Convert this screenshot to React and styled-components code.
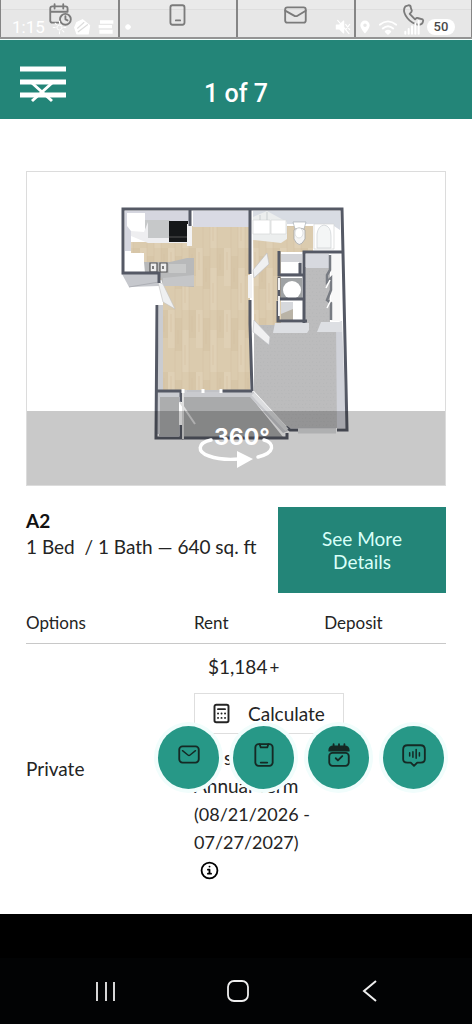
import React from "react";
import styled, { createGlobalStyle } from "styled-components";

const GlobalStyle = createGlobalStyle`
  * { box-sizing: border-box; }
  body { margin: 0; background: #000; }
  button { font-family: inherit; cursor: pointer; }
`;

const Screen = styled.div`
  display: flex;
  flex-direction: column;
  min-height: 100vh;
  background: #000;
  color: #242424;
  font-family: Lato, "Open Sans", sans-serif;
`;

const TopBar = styled.div`
  position: relative;
  background: #e8e8e8;
  border-bottom: 1px solid #f4fffd;
`;

const Tabs = styled.nav`
  display: grid;
  grid-template-columns: repeat(4, 1fr);
  height: 39px;
  border-bottom: 2px solid #949494;
`;

const Tab = styled.button`
  display: flex;
  justify-content: center;
  align-items: flex-start;
  padding: 2px 0 0;
  border: 0;
  border-left: 2px solid #858585;
  background: linear-gradient(#eaeaea 9px, #dedede 9px, #dedede 10px, #e7e7e7 10px);
  color: #7b7b7b;

  &:first-child { border-left: 1px solid #858585; }
  &:last-child { border-right: 1px solid #858585; }
`;

const StatusBar = styled.div`
  position: absolute;
  inset: 17px 17px auto 12px;
  display: flex;
  align-items: center;
  height: 20px;
  gap: 7px;
  color: #fff;
  font: 400 17px/20px Roboto, sans-serif;
  pointer-events: none;
`;

const Spacer = styled.span`
  flex: 1;
`;

const Battery = styled.span`
  width: 28px;
  border-radius: 8px;
  background: #fff;
  color: #4a4a4a;
  font-size: 13px;
  font-weight: 500;
  line-height: 16px;
  text-align: center;
`;

const Header = styled.header`
  display: grid;
  grid-template-columns: 1fr auto 1fr;
  align-items: start;
  height: 79px;
  padding: 25px 19px 0;
  background: #238578;
`;

const MenuButton = styled.button`
  display: flex;
  justify-self: start;
  padding: 0;
  border: 0;
  background: none;
`;

const Counter = styled.span`
  padding-top: 14px;
  color: #fff;
  font: 500 25px/30px Roboto, sans-serif;
`;

const Main = styled.main`
  padding: 52px 26px 30px;
  background: #fff;
`;

const PlanFrame = styled.button`
  display: block;
  width: 100%;
  padding: 0;
  border: 1px solid #dcdcdc;
  background: #fff;

  svg { display: block; width: 100%; height: auto; }
`;

const Summary = styled.section`
  display: flex;
  justify-content: space-between;
  padding-top: 21px;
`;

const PlanName = styled.h2`
  margin: 0;
  color: #111;
  font-size: 19px;
  font-weight: 700;
  line-height: 27px;
`;

const PlanFacts = styled.p`
  margin: 0;
  font-size: 19px;
  line-height: 26px;
  white-space: pre;
`;

const DetailsButton = styled.button`
  flex: 0 0 40%;
  padding: 20px 32px;
  border: 0;
  background: #238578;
  color: #d9fff8;
  font-size: 19px;
  line-height: 23px;
`;

const Pricing = styled.section`
  position: relative;
  padding-top: 16px;
`;

const PriceTable = styled.table`
  width: 100%;
  table-layout: fixed;
  border-collapse: collapse;
  font-size: 19px;
  line-height: 28px;
`;

const HeadCell = styled.th`
  width: ${(p) => p.$width};
  padding: 0 0 6px;
  border-bottom: 1px solid #c8c8c8;
  font-size: 17px;
  font-weight: 400;
  text-align: left;
`;

const Cell = styled.td`
  padding: 9px 0 0;
  vertical-align: middle;
  white-space: nowrap;
`;

const Price = styled.div`
  padding-left: 14px;

  small { margin-left: 2px; font-size: 17px; }
`;

const CalculateButton = styled.button`
  display: flex;
  align-items: center;
  gap: 16px;
  width: 150px;
  height: 41px;
  margin: 11px 0 10px;
  padding: 0 16px 0 16px;
  border: 1px solid #dedede;
  background: #fff;
  color: #242424;
  font-size: 19px;
  line-height: 28px;
`;

const TermLine = styled.div`
  padding-left: ${(p) => (p.$indent ? "30px" : "0")};
  font-size: ${(p) => (p.$dates ? "18px" : "19px")};
`;

const InfoButton = styled.button`
  display: flex;
  align-items: center;
  height: 28px;
  padding: 0 6px;
  border: 0;
  background: none;
`;

const FloatingActions = styled.div`
  position: absolute;
  right: 2px;
  bottom: 95px;
  display: flex;
  gap: 14px;
`;

const RoundButton = styled.button`
  display: flex;
  justify-content: center;
  width: 61px;
  height: 63px;
  padding: 16px 0 0;
  border: 0;
  border-radius: 50%;
  box-shadow: 0 0 0 4px #f1fdfc;
  background: #279887;
  color: #152924;
`;

const SystemNav = styled.nav`
  display: flex;
  justify-content: center;
  gap: 92px;
  height: 66px;
  margin-top: auto;
  padding: 13px 0 0 4px;
  background: #020304;
`;

const SystemButton = styled.button`
  width: 40px;
  height: 40px;
  padding: 0;
  border: 0;
  background: none;
  color: #eee;
`;

function Icon({ size = 26, view = 24, stroke = 1.7, children }) {
  return (
    <svg
      width={size}
      height={size}
      viewBox={`0 0 ${view} ${view}`}
      fill="none"
      stroke="currentColor"
      strokeWidth={stroke}
      strokeLinecap="round"
      strokeLinejoin="round"
      aria-hidden="true"
    >
      {children}
    </svg>
  );
}

function FloorPlan() {
  return (
    <svg viewBox="27 172 418 313" role="img" aria-label="A2 floor plan">
      <defs>
        <pattern id="wood" width="28" height="62" patternUnits="userSpaceOnUse">
          <rect width="28" height="62" fill="#dbcbae" />
          <path d="M0 0h7v38H0zM14 20h7v42h-7z" fill="#dfd0b5" />
          <path d="M7 8h7v33H7zM21 0h7v28h-7z" fill="#d7c6a8" />
          <path d="M3 4v18M10 20v14M17 35v20M24 6v16" stroke="#d1bf9f" strokeWidth=".6" />
          <path d="M7 0v62M14 0v62M21 0v62" stroke="#d2c09f" strokeWidth=".4" />
        </pattern>
        <pattern id="carpet" width="7" height="7" patternUnits="userSpaceOnUse">
          <rect width="7" height="7" fill="#bcbcbd" />
          <path d="M1 1l2 1M5 4l-1 2M2 5l-1 1M6 1v1" stroke="#b5b6b7" strokeWidth=".7" />
        </pattern>
      </defs>

      {/* Floors */}
      <path d="M131 242H192V226H250V391H163V280H145V262H131Z" fill="url(#wood)" />
      <path d="M253 226H313V252H281V325H269L254 326Z" fill="url(#wood)" />
      <path d="M254 325H303V267H330V325H337V428H288L254 391Z" fill="url(#carpet)" />
      <path d="M184 397H251L283 437H184Z" fill="#a9aaab" />
      <path d="M159 397H179V436H159Z" fill="#acadae" />

      {/* Wall faces */}
      <path d="M125 211H191V222H131V251H125Z" fill="#d5d6df" />
      <path d="M193 211H249V227H193Z" fill="#d9dae4" />
      <path d="M253 211H340V230L331 224H287V229H253Z" fill="#d8dce3" />
      <path d="M122 274H159V286L129 287Z" fill="#c6c8cd" />
      <path d="M129 287 159 282" stroke="#aeb0b6" />
      <path d="M159 305H163V390H184V397H160V434H156Z" fill="#caccd1" />
      <path d="M336 323 342 321 346 428H337Z" fill="#d0d2d9" />
      <path d="M252 390H183V397H250L283 433 288 431Z" fill="#c9cace" />
      <path d="M306 254H329V268H306Z" fill="#d7d9df" />

      {/* Kitchen */}
      <path d="M145 220H170V238H145Z" fill="#c6c8c9" />
      <path d="M127 213H145V232L131 231 127 226Z" fill="#fff" />
      <path d="M144 232 148 222V238H190V243H148L131 236V231Z" fill="#eeeef0" />
      <path d="M148 221H169V237H148Z" fill="#c6c8c9" />
      <path d="M169 221H188V242H169Z" fill="#151719" />
      <path d="M169 237H188" stroke="#555" />
      <path d="M187 224H192V246H187Z" fill="#f3f3f4" />
      <path d="M125 253H144V271H125Z" fill="#fff" />
      <path d="M144 262H170L187 258H194V287L163 285 159 273H145Z" fill="#b8b9ba" />
      <path d="M169 264H186V273H169Z" fill="#c8c9c9" />
      <path d="M163 278 194 275V286H163Z" fill="#c5c6c8" />
      <path d="M150 263h7v9h-7zM160 263h7v9h-7z" fill="#eee" stroke="#555" strokeWidth="1.2" />
      <path d="M153 266v3M163 266v3" stroke="#555" strokeWidth="1.5" />
      <path d="M158 282 163 284 175 309 163 302Z" fill="#eff0f1" stroke="#c1c1c1" strokeWidth=".6" />

      {/* Bathroom and laundry */}
      <path d="M253 217 267 211 287 222V239L281 243 253 240Z" fill="#eceeee" />
      <path d="M253 220H270V234H253ZM271 220H286V234H271Z" fill="#fff" stroke="#d9dada" strokeWidth=".8" />
      <path d="M267 212V220M260 215V220" stroke="#bdc1c4" strokeWidth=".7" />
      <path d="M293 222H306L304 229H295Z" fill="#fff" stroke="#9ba2a7" strokeWidth=".6" />
      <path d="M294 230Q299 226 305 230V239Q299 250 294 239Z" fill="#f5f5f5" stroke="#a5a6a7" strokeWidth=".8" />
      <ellipse cx="299" cy="233" rx="4" ry="5" fill="#fff" stroke="#c9cdce" strokeWidth=".6" />
      <path d="M314 224H334V249H314Z" fill="#fff" stroke="#d4d5d5" strokeWidth=".7" />
      <path d="M317 248V234Q318 226 324 225Q331 226 331 236V248Z" fill="#f4f6f6" stroke="#cbd0d2" strokeWidth=".7" />
      <path d="M281 254H302V275H281Z" fill="#d3d4d8" />
      <path d="M281 262H299V273H281Z" fill="#fff" />
      <path d="M281 278H302V299H281Z" fill="#9fa2a4" />
      <circle cx="292" cy="290" r="9" fill="#fff" />
      <path d="M281 302H293V320H281Z" fill="#b9b3a6" />
      <path d="M281 302H293V309L281 314Z" fill="#d6d8dc" />
      <path d="M293 302H304V320H293Z" fill="#fff" />
      <path d="M331 254H340V321H331Z" fill="#f8f8f8" />
      <path d="M330 255V270L327 275V282L331 278V290L327 300L331 303V320" fill="none" stroke="#777b82" strokeWidth="2.5" />
      <path d="M326 288 330 280M327 308 331 300" stroke="#fff" strokeWidth="1.5" />

      {/* Walls */}
      <g fill="none" stroke="#555965" strokeWidth="3" strokeLinejoin="miter">
        <path d="M159 273H123V209H342L347 430H337" />
        <path d="M190 210V226M159 272V283M250 209V274M250 300V324L252 391" />
        <path d="M157 305 156 438H181V425M156 391H181V402M222 391H252" />
        <path d="M342 252H304V324M279 251V275H303M279 277V299H303M278 301V321H307" />
        <path d="M286 427 290 430H298M182 438H287V433M300 263V274" />
      </g>
      <path d="M250 275V298" stroke="#f2f2f3" strokeWidth="4" />
      <path d="M279 278V290M279 296V316" stroke="#f2f2f3" strokeWidth="2" />
      <path d="M298 431H336" stroke="#dfe0e1" strokeWidth="5" />
      <path d="M298 428H336M187 391H221" stroke="#b9babd" />
      <path d="M275 323H309V330L307 333H273Z" fill="#dddfe3" />
      <path d="M321 322H342V332H317Z" fill="#dddfe3" />

      {/* Doors */}
      <path d="M253 270 267 253 269 264 254 278Z" fill="#eff0f1" stroke="#bcbec2" strokeWidth=".6" />
      <path d="M254 320 270 337 269 345 253 332Z" fill="#f0f0f1" stroke="#bcbec2" strokeWidth=".6" />
      <path d="M180 402 195 424M183 392V439" stroke="#dedede" strokeWidth="2" />
      <path d="M253 394 287 430" stroke="#dcdddf" strokeWidth="4" />
      <path d="M183 389V393M203 389V393M221 389V393" stroke="#fff" strokeWidth="3" />

      {/* Virtual tour banner */}
      <rect x="27" y="411" width="418" height="75" fill="#000" fillOpacity=".21" />
      <g fill="none" stroke="#fff" strokeWidth="3.5" strokeLinecap="round">
        <path d="M211 440C197 443 197 452 209 456C217 459 227 460 239 459" />
        <path d="M264 440C275 443 275 453 258 457" />
      </g>
      <path d="M237 451 253 459 237 468Z" fill="#fff" />
      <text x="214" y="445" fill="#fff" fontFamily="Inter, sans-serif" fontSize="23" fontWeight="700">360°</text>
    </svg>
  );
}

export default function App() {
  return (
    <Screen>
      <GlobalStyle />
      <TopBar>
        <Tabs aria-label="Contact">
          <Tab aria-label="Schedule">
            <Icon>
              <path d="M11 19H5a2 2 0 0 1-2-2V6a2 2 0 0 1 2-2h12a2 2 0 0 1 2 2v3M3 9h16M7 2v4M15 2v4" />
              <circle cx="17" cy="16" r="5" />
              <path d="M17 13v3l2 1" />
            </Icon>
          </Tab>
          <Tab aria-label="Text">
            <Icon>
              <rect x="5" y="3" width="13" height="18" rx="2" />
              <path d="M10 17h4" />
            </Icon>
          </Tab>
          <Tab aria-label="Email">
            <Icon>
              <rect x="2" y="5" width="19" height="14" rx="2" />
              <path d="M2 8l9 5q1 0 2 0l8-5" />
            </Icon>
          </Tab>
          <Tab aria-label="Call">
            <Icon>
              <path d="M4 4l3-1q2 0 2 2l1 3q0 1-2 3l5 5q2-2 3-1l4 1q1 1 0 3-1 2-4 2-6-1-10-6Q2 10 3 6z" />
            </Icon>
          </Tab>
        </Tabs>
        <StatusBar>
          <span>1:15</span>
          <Icon size={15}>
            <circle cx="12" cy="12" r="4" strokeDasharray="2 2" />
            <path d="M12 2v3M12 19v3M2 12h3M19 12h3M5 5l2 2M17 17l2 2" />
          </Icon>
          <Icon size={17}>
            <path d="M4 5l8-4 10 8-2 12H4l-3-9z" fill="currentColor" />
            <path d="M5 13l9-8M6 18L19 8" stroke="#ddd" />
          </Icon>
          <Icon size={16}>
            <path d="M3 2h20v5H3zM1 9h20v5H1zM2 16h20v6H2z" fill="currentColor" stroke="none" />
          </Icon>
          <Icon size={14}><circle cx="12" cy="12" r="4" fill="currentColor" /></Icon>
          <Spacer />
          <Icon size={16}>
            <path d="M2 9h5l6-6v18l-6-6H2z" fill="currentColor" />
            <path d="M16 8l6 8M22 8l-6 8M4 2l17 20" />
          </Icon>
          <Icon size={14}>
            <path fillRule="evenodd" d="M12 1a8 8 0 0 0-8 8c0 6 8 14 8 14s8-8 8-14a8 8 0 0 0-8-8zm0 5a3 3 0 1 1 0 6 3 3 0 0 1 0-6z" fill="currentColor" stroke="none" />
          </Icon>
          <Icon size={18} stroke={2.4}>
            <path d="M1 9q11-9 22 0M5 14q7-6 14 0M9 18q3-2 6 0l-3 3z" />
          </Icon>
          <Icon size={16} stroke={3}>
            <path d="M2 22v-3M7 22v-7M12 22V11M17 22V7M22 22V3" />
          </Icon>
          <Battery>50</Battery>
        </StatusBar>
      </TopBar>

      <Header>
        <MenuButton aria-label="Menu">
          <svg width="48" height="40" viewBox="0 0 48 40" fill="none" stroke="#fff" aria-hidden="true">
            <path d="M1 4H47M1 17H47M1 30H47" strokeWidth="5" />
            <path d="M13 18L33 36M33 18L13 36" strokeWidth="3" />
          </svg>
        </MenuButton>
        <Counter>1 of 7</Counter>
      </Header>

      <Main>
        <PlanFrame aria-label="Open 360° view"><FloorPlan /></PlanFrame>

        <Summary>
          <div>
            <PlanName>A2</PlanName>
            <PlanFacts>{"1 Bed  / 1 Bath — 640 sq. ft"}</PlanFacts>
          </div>
          <DetailsButton>See More Details</DetailsButton>
        </Summary>

        <Pricing>
          <PriceTable>
            <thead>
              <tr>
                <HeadCell $width="40%">Options</HeadCell>
                <HeadCell $width="31%">Rent</HeadCell>
                <HeadCell $width="29%">Deposit</HeadCell>
              </tr>
            </thead>
            <tbody>
              <tr>
                <Cell>Private</Cell>
                <Cell>
                  <Price>$1,184<small>+</small></Price>
                  <CalculateButton>
                    <Icon size={21} stroke={2.2}>
                      <rect x="4" y="2" width="16" height="20" rx="2" />
                      <path d="M8 7h8M8 12h.1M12 12h.1M16 12h.1M8 17h.1M12 17h.1M16 17h.1" />
                    </Icon>
                    Calculate
                  </CalculateButton>
                  <TermLine $indent>s</TermLine>
                  <TermLine>Annual Term</TermLine>
                  <TermLine $dates>(08/21/2026 -</TermLine>
                  <TermLine $dates>07/27/2027)</TermLine>
                  <InfoButton aria-label="Lease term information">
                    <Icon size={19} stroke={2.3}>
                      <circle cx="12" cy="12" r="10" />
                      <path d="M10 11h2v5M10 16h4M12 7h.1" />
                    </Icon>
                  </InfoButton>
                </Cell>
                <Cell />
              </tr>
            </tbody>
          </PriceTable>
          <FloatingActions>
            <RoundButton aria-label="Email us">
              <Icon>
                <rect x="3" y="4" width="18" height="15" rx="3" />
                <path d="M6 8l5 4q1 1 2 0l5-4" strokeWidth="1.3" />
              </Icon>
            </RoundButton>
            <RoundButton aria-label="Text us">
              <Icon>
                <rect x="4" y="2" width="16" height="20" rx="3" />
                <path d="M8 2l1 3h6l1-3M9 19h6" />
              </Icon>
            </RoundButton>
            <RoundButton aria-label="Book a tour">
              <Icon>
                <path d="M3 8q0-4 4-4h10q4 0 4 4z" fill="currentColor" />
                <path d="M7 2v4M12 2v4M17 2v4M9 15l2 2 4-4" />
                <rect x="3" y="10" width="18" height="12" rx="3" />
              </Icon>
            </RoundButton>
            <RoundButton aria-label="Chat">
              <Icon>
                <path d="M6 3h12q4 0 4 4v9q0 3-4 3h-3l-3 3-3-3H6q-4 0-4-3V7q0-4 4-4z" />
                <path d="M8 10v3M11 9v5M14 7v8M17 10v3" strokeWidth="1.4" />
              </Icon>
            </RoundButton>
          </FloatingActions>
        </Pricing>
      </Main>

      <SystemNav aria-label="System">
        <SystemButton aria-label="Recent apps">
          <Icon size={40} view={40} stroke={1.8}><path d="M11 11v19M20 11v19M28 11v19" strokeLinecap="butt" /></Icon>
        </SystemButton>
        <SystemButton aria-label="Home">
          <Icon size={40} view={40} stroke={1.8}><rect x="10" y="10" width="20" height="20" rx="6" /></Icon>
        </SystemButton>
        <SystemButton aria-label="Back">
          <Icon size={40} view={40} stroke={2}><path d="M26 10L14 20l12 10" strokeLinecap="butt" strokeLinejoin="miter" /></Icon>
        </SystemButton>
      </SystemNav>
    </Screen>
  );
}
